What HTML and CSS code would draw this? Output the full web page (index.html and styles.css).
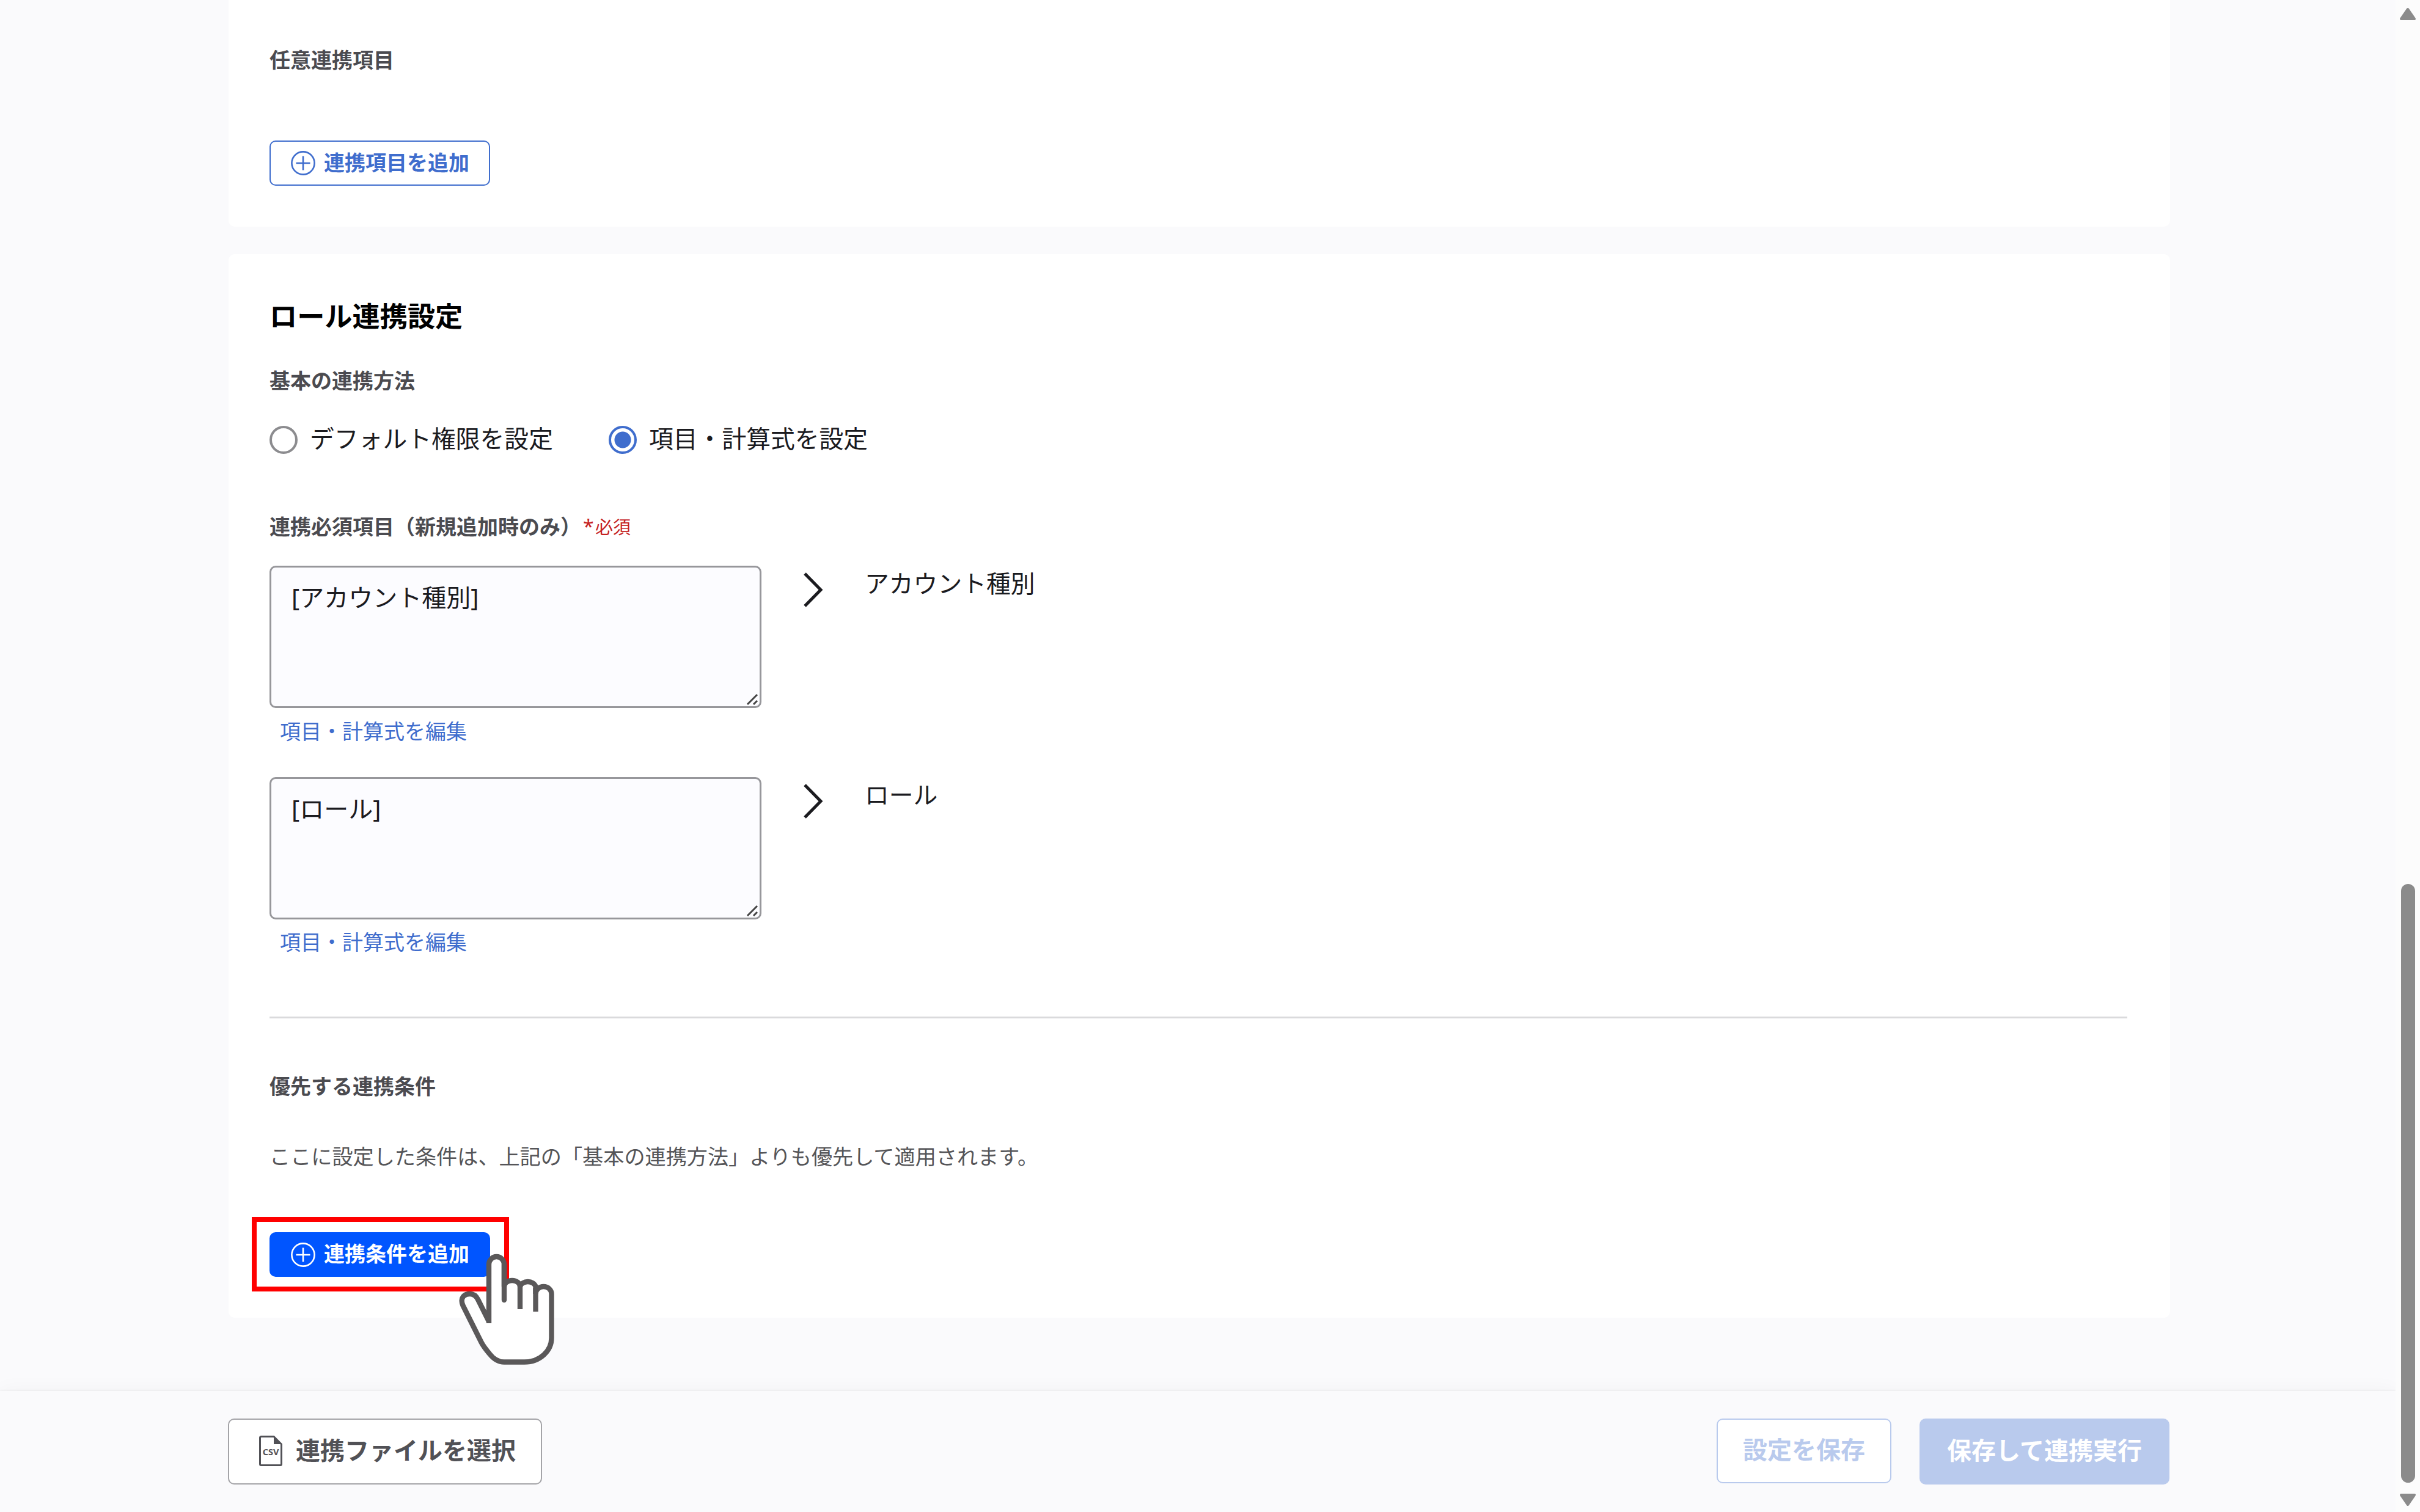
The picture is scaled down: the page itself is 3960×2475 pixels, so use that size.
FILE: index.html
```html
<!DOCTYPE html>
<html lang="ja">
<head>
<meta charset="utf-8">
<title>ロール連携設定</title>
<link rel="stylesheet" href="styles.css">
</head>
<body>
<div class="app">
  <div class="page">
    <main class="content">
      <section class="card card-optional">
        <h3 class="label">任意連携項目</h3>
        <button class="btn-add">
          <svg class="plus" viewBox="0 0 40 40"><circle cx="20" cy="20" r="18.6"/><path d="M8.500 20H31.500M20 8.500V31.500"/></svg>
          <span>連携項目を追加</span>
        </button>
      </section>
      <section class="card card-role">
        <h2 class="title">ロール連携設定</h2>
        <h3 class="label label-method">基本の連携方法</h3>
        <div class="radios">
          <label class="radio"><span class="dot"></span><span class="radio-text">デフォルト権限を設定</span></label>
          <label class="radio"><span class="dot dot-on"></span><span class="radio-text">項目・計算式を設定</span></label>
        </div>
        <h3 class="label label-required">連携必須項目（新規追加時のみ）<span class="required"><span class="asterisk">*</span>必須</span></h3>
        <div class="mapping">
          <div class="source">
            <div class="textbox">[アカウント種別]<svg class="grip" viewBox="0 0 20 20"><path d="M2 18L18 2M12 18L18 12"/></svg></div>
            <a class="edit">項目・計算式を編集</a>
          </div>
          <svg class="chevron" viewBox="0 0 34 60"><path d="M3 3L29 29.500L3 56"/></svg>
          <div class="target">アカウント種別</div>
        </div>
        <div class="mapping mapping-next">
          <div class="source">
            <div class="textbox">[ロール]<svg class="grip" viewBox="0 0 20 20"><path d="M2 18L18 2M12 18L18 12"/></svg></div>
            <a class="edit edit-tight">項目・計算式を編集</a>
          </div>
          <svg class="chevron" viewBox="0 0 34 60"><path d="M3 3L29 29.500L3 56"/></svg>
          <div class="target">ロール</div>
        </div>
        <div class="divider"></div>
        <h3 class="label label-priority">優先する連携条件</h3>
        <p class="description">ここに設定した条件は、上記の「基本の連携方法」よりも優先して適用されます。</p>
        <div class="action">
          <button class="btn-add btn-add-primary">
            <svg class="plus" viewBox="0 0 40 40"><circle cx="20" cy="20" r="18.600"/><path d="M8.500 20H31.500M20 8.500V31.500"/></svg>
            <span>連携条件を追加</span>
          </button>
          <div class="highlight"></div>
          <svg class="hand" viewBox="740 2045 180 195">
            <path class="hand-shape" d="M800 2166V2070A12.500 13 0 0 1 825 2070V2106A13 10 0 0 1 851 2106A13 10 0 0 1 876.500 2106V2118A13 12 0 0 1 902.500 2118V2190C902.500 2211 884 2229.500 858 2229.500H825C815 2229.500 808 2225 801 2216C796 2210 791 2204 787.500 2197L757.500 2137C752 2124 760 2118 769 2118C775 2118 779.500 2122 782 2127L800 2163"/>
            <path class="hand-line" stroke-linecap="round" d="M825 2070V2128"/>
            <path class="hand-line" d="M851 2104V2143M876.500 2108V2147"/>
          </svg>
        </div>
      </section>
    </main>
    <footer class="footer">
      <button class="btn btn-file">
        <svg class="csv" viewBox="0 0 40 52"><path class="csv-page" d="M4 2.500H25L37.500 15V47.500Q37.500 49.500 35.500 49.500H4.500Q2.500 49.500 2.500 47.500V4.500Q2.500 2.500 4.500 2.500"/><path class="csv-fold" d="M25 2V15H38Z"/><text x="20" y="32.500" text-anchor="middle">CSV</text></svg>
        <span>連携ファイルを選択</span>
      </button>
      <div class="footer-actions">
        <button class="btn btn-save">設定を保存</button>
        <button class="btn btn-run">保存して連携実行</button>
      </div>
    </footer>
  </div>
  <div class="scrollbar">
    <svg class="arrow" viewBox="0 0 28 22"><path d="M14 3L25 19H3Z"/></svg>
    <div class="thumb"></div>
    <svg class="arrow" viewBox="0 0 28 22"><path d="M14 19L25 3H3Z"/></svg>
  </div>
</div>
</body>
</html>
```
FILE: styles.css
```css
* { box-sizing: border-box; margin: 0; padding: 0; }
body {
  width: 3960px;
  height: 2475px;
  overflow: hidden;
  background: #fafafc;
  color: #1b1b1f;
  font-family: "Noto Sans CJK JP", sans-serif;
  font-size: 40px;
}
button { font: inherit; white-space: nowrap; }
svg { display: block; flex: none; }

.app { display: flex; height: 2475px; }
.page { width: 3920px; display: flex; flex-direction: column; }
.content { height: 2277px; padding: 0 369px 0 374px; }

.card { background: #fff; padding: 0 70px 0 67px; }
.card-optional { height: 371px; padding-top: 77px; border-radius: 0 0 10px 10px; }
.card-role { height: 1741px; margin-top: 45px; padding-top: 70px; border-radius: 10px; }

.title { font-size: 45.2px; line-height: 60px; font-weight: 700; color: #000; }
.label { font-size: 34px; line-height: 40px; height: 40px; font-weight: 700; color: #4b4b50; white-space: nowrap; }
.label-method { margin-top: 56px; }
.label-required { margin-top: 98px; display: flex; }
.label-priority { margin-top: 90px; }
.required { margin-left: 3px; font-size: 29px; font-weight: 400; color: #c5221f; }
.asterisk { display: inline-block; width: 20px; font-family: "Noto Sans", sans-serif; font-size: 32px; }

.btn-add {
  display: flex;
  align-items: center;
  gap: 14px;
  width: 361px;
  height: 74px;
  padding-left: 33px;
  border: 2.500px solid #3f6dcd;
  border-radius: 10px;
  background: #fff;
  color: #3f6dcd;
  font-size: 34px;
  line-height: 40px;
  font-weight: 700;
}
.card-optional .btn-add { margin-top: 113px; }
.btn-add span { margin-top: -5px; }
.btn-add-primary { height: 73px; background: #0055ff; border-color: #0055ff; color: #fff; }
.plus { width: 40px; height: 40px; fill: none; stroke: currentColor; stroke-width: 2.6; }

.radios { display: flex; margin-top: 55px; height: 46px; }
.radio { display: flex; gap: 20px; width: 555px; }
.dot { width: 46px; height: 46px; border: 4px solid #8c8c8f; border-radius: 50%; background: #fff; }
.dot-on { border-color: #3f6dcd; background: radial-gradient(circle, #3f6dcd 13px, #fff 14px); }
.radio-text { line-height: 37px; font-size: 39.8px; white-space: nowrap; }

.mapping { display: flex; margin-top: 45px; height: 289px; }
.mapping-next { margin-top: 57px; height: 288px; }
.source { width: 805px; }
.textbox {
  position: relative;
  height: 233px;
  padding: 23px 33px;
  border: 3px solid #97979b;
  border-radius: 10px;
  background: #fcfcff;
  font-family: "Noto Sans", "Noto Sans CJK JP", sans-serif;
  line-height: 52px;
}
.grip { position: absolute; right: 2px; bottom: 1px; width: 20px; height: 20px; fill: none; stroke: #444; stroke-width: 3; }
.edit { display: block; margin: 17px 0 0 17px; font-size: 34px; line-height: 40px; color: #3f6dcd; }
.edit-tight { margin-top: 16px; }
.chevron { width: 34px; height: 60px; margin: 10px 0 0 68px; fill: none; stroke: #1b1b1f; stroke-width: 5; }
.target { margin-left: 67px; font-size: 39.8px; line-height: 54px; }

.divider { margin-top: 104px; height: 3px; background: #dadadc; }
.description { margin-top: 74px; font-size: 34.15px; line-height: 40px; color: #555558; white-space: nowrap; }

.action { position: relative; width: 361px; margin-top: 106px; }
.highlight { position: absolute; left: -29px; top: -25px; width: 421px; height: 122px; border: 8px solid #f00; }
.hand { position: absolute; left: 299px; top: 28px; width: 180px; height: 195px; stroke: #5a5859; stroke-width: 8.4; }
.hand-shape { fill: #fff; }
.hand-line { fill: none; }

.footer {
  display: flex;
  justify-content: space-between;
  align-items: flex-start;
  height: 198px;
  padding: 45px 370px 0 373px;
  background: #fafafc;
  box-shadow: 0 -1px 30px rgba(0, 0, 0, 0.04), 0 -2px 2px rgba(0, 0, 0, 0.03);
  clip-path: inset(-60px 0 0 0);
}
.btn { display: flex; align-items: center; justify-content: center; height: 108px; border-radius: 10px; font-weight: 700; line-height: 50px; padding-bottom: 8px; }
.btn-file { width: 514px; gap: 21px; padding-left: 7px; border: 2px solid #a4a4a8; background: #fff; color: #515156; }
.csv { width: 40px; height: 52px; margin-top: 6px; }
.csv-page { fill: none; stroke: #515156; stroke-width: 3; }
.csv-fold { fill: #515156; }
.csv text { font: 700 14.500px "Noto Sans", sans-serif; fill: #515156; }
.footer-actions { display: flex; gap: 46px; }
.btn-save { width: 286px; height: 106px; border: 2px solid #b9caed; background: #fff; color: #b9caed; }
.btn-run { width: 409px; border: 0; background: #b9caed; color: #fff; }

.scrollbar { width: 40px; height: 2475px; padding: 12px 0 9px; display: flex; flex-direction: column; align-items: center; background: #fcfcfc; }
.arrow { width: 28px; height: 22px; fill: #8b8b8b; stroke: #8b8b8b; stroke-width: 4; stroke-linejoin: round; }
.thumb { width: 23px; height: 980px; margin: 1413px 0 17px; border-radius: 12px; background: #8b8b8b; }
```
